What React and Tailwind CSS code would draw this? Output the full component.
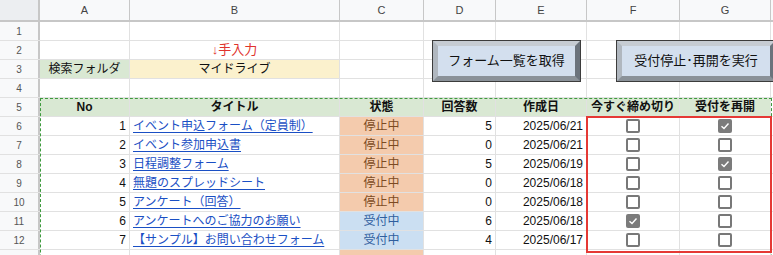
import React from 'react';

const COLS = ['w-[40px]', 'w-[90px]', 'w-[210px]', 'w-[84px]', 'w-[72px]', 'w-[91px]', 'w-[93px]', 'w-[91px]'];
const LETTERS = ['A', 'B', 'C', 'D', 'E', 'F', 'G'];

const rows = [
  { no: 1, title: 'イベント申込フォーム（定員制）', stopped: true, count: 5, date: '2025/06/21', close: false, reopen: true },
  { no: 2, title: 'イベント参加申込書', stopped: true, count: 0, date: '2025/06/21', close: false, reopen: false },
  { no: 3, title: '日程調整フォーム', stopped: true, count: 5, date: '2025/06/19', close: false, reopen: true },
  { no: 4, title: '無題のスプレッドシート', stopped: true, count: 0, date: '2025/06/18', close: false, reopen: false },
  { no: 5, title: 'アンケート（回答）', stopped: true, count: 0, date: '2025/06/18', close: false, reopen: false },
  { no: 6, title: 'アンケートへのご協力のお願い', stopped: false, count: 6, date: '2025/06/18', close: true, reopen: false },
  { no: 7, title: '【サンプル】お問い合わせフォーム', stopped: false, count: 4, date: '2025/06/17', close: false, reopen: false },
];

// ─── セル ─────────────────────────────────────────────
function Cell({ w, className = '', children }) {
  return (
    <div className={`${w} shrink-0 h-full border-r border-[#e1e1e1] flex items-center overflow-visible whitespace-nowrap ${className}`}>
      {children}
    </div>
  );
}

function RowNum({ n }) {
  return (
    <div className="w-[40px] shrink-0 h-full bg-[#f8f9fa] border-r-2 border-[#c7c7c7] flex items-center justify-center text-[10px] text-[#555]">
      {n}
    </div>
  );
}

function Row({ n, children }) {
  return (
    <div className="flex h-[19px] border-b border-[#e1e1e1]">
      <RowNum n={n} />
      {children}
    </div>
  );
}

function Check({ on }) {
  if (on) {
    return (
      <div className="w-[14px] h-[14px] rounded-[2px] bg-[#7b7b7b] flex items-center justify-center">
        <svg width="10" height="10" viewBox="0 0 10 10">
          <path d="M1.5 5.2 L4 7.5 L8.5 2.5" fill="none" stroke="#fff" strokeWidth="1.4" />
        </svg>
      </div>
    );
  }
  return <div className="w-[14px] h-[14px] rounded-[2px] border-2 border-[#787878]" />;
}

// ─── 3D ボタン ─────────────────────────────────────────
function BevelButton({ className, children }) {
  return (
    <div className={`absolute h-[42px] border border-[#3c3c3c] ${className}`}>
      <div className="w-full h-full border-[5px] border-t-[#c6ccd3] border-l-[#b0b7bf] border-r-[#6b737c] border-b-[#8b9299] bg-[#d3dfee] flex items-center justify-center text-[13px] text-[#111]">
        {children}
      </div>
    </div>
  );
}

export default function App() {
  const empty = COLS.slice(1).map((w, i) => <Cell key={i} w={w} />);

  return (
    <div
      className="relative w-[773px] h-[255px] overflow-hidden bg-white text-[12px] text-[#111]"
      style={{ fontFamily: '"Liberation Sans", "Noto Sans CJK JP", sans-serif' }}
    >
      {/* 列ヘッダー */}
      <div className="flex h-[22px] border-b-2 border-[#c7c7c7] bg-[#f8f9fa]">
        <div className="w-[40px] shrink-0 h-full bg-[#eceef1] border-r-2 border-[#c7c7c7]" />
        {LETTERS.map((l, i) => (
          <div key={l} className={`${COLS[i + 1]} shrink-0 h-full border-r border-[#c7c7c7] flex items-center justify-center text-[11px] text-[#444]`}>
            {l}
          </div>
        ))}
      </div>

      <Row n={1}>{empty}</Row>
      <Row n={2}>
        <Cell w={COLS[1]} />
        <Cell w={COLS[2]} className="justify-center text-[13px] text-[#e0322d]">↓手入力</Cell>
        {COLS.slice(3).map((w, i) => <Cell key={i} w={w} />)}
      </Row>
      <Row n={3}>
        <Cell w={COLS[1]} className="justify-center bg-[#d9e8d3]">検索フォルダ</Cell>
        <Cell w={COLS[2]} className="justify-center bg-[#fbf1cd]">マイドライブ</Cell>
        {COLS.slice(3).map((w, i) => <Cell key={i} w={w} />)}
      </Row>
      <Row n={4}>{empty}</Row>
      <Row n={5}>
        {['No', 'タイトル', '状態', '回答数', '作成日', '今すぐ締め切り', '受付を再開'].map((t, i) => (
          <Cell key={t} w={COLS[i + 1]} className="justify-center bg-[#d9e8d3] font-bold">{t}</Cell>
        ))}
      </Row>

      {rows.map((r, i) => (
        <Row key={r.no} n={6 + i}>
          <Cell w={COLS[1]} className="justify-end pr-[3px]">{r.no}</Cell>
          <Cell w={COLS[2]} className="pl-[3px]">
            <span className="text-[#1a4fc4] underline underline-offset-[2px]">{r.title}</span>
          </Cell>
          <Cell
            w={COLS[3]}
            className={`justify-center ${r.stopped ? 'bg-[#f4cbad] text-[#7c4a22]' : 'bg-[#cbdff2] text-[#2f5e9e]'}`}
          >
            {r.stopped ? '停止中' : '受付中'}
          </Cell>
          <Cell w={COLS[4]} className="justify-end pr-[3px]">{r.count}</Cell>
          <Cell w={COLS[5]} className="justify-end pr-[3px]">{r.date}</Cell>
          <Cell w={COLS[6]} className="justify-center"><Check on={r.close} /></Cell>
          <Cell w={COLS[7]} className="justify-center"><Check on={r.reopen} /></Cell>
        </Row>
      ))}

      {/* 13 行目（画面下端で切れている） */}
      <div className="flex h-[19px]">
        <div className="w-[40px] shrink-0 h-full bg-[#f8f9fa] border-r-2 border-[#c7c7c7]" />
        <Cell w={COLS[1]} />
        <Cell w={COLS[2]} />
        <Cell w={COLS[3]} className="bg-[#f4cbad]" />
        {COLS.slice(4).map((w, i) => <Cell key={i} w={w} />)}
      </div>

      {/* コピー範囲の破線 */}
      <div className="absolute left-[40px] top-[98px] w-[732px] h-[200px] border border-dashed border-[#3d9a3d] pointer-events-none" />

      {/* 選択範囲 */}
      <div className="absolute left-[586px] top-[116px] w-[186px] h-[137px] border-2 border-[#e53935] pointer-events-none" />

      {/* ボタン */}
      <BevelButton className="left-[432px] top-[40px] w-[149px]">フォーム一覧を取得</BevelButton>
      <BevelButton className="left-[616px] top-[40px] w-[160px]">受付停止･再開を実行</BevelButton>
    </div>
  );
}
